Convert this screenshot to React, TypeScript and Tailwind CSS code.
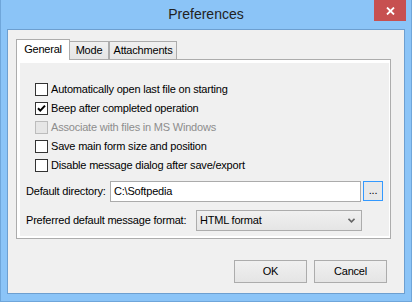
import React from 'react';

const Check: React.FC<{ checked?: boolean; disabled?: boolean }> = ({ checked, disabled }) => (
    <span
        className={`w-[13px] h-[13px] shrink-0 border flex items-center justify-center ${disabled ? 'border-[#bcbcbc] bg-[#e6e6e6]' : 'border-[#333333] bg-white'}`}
    >
        {checked && (
            <svg width="11" height="11" viewBox="0 0 11 11">
                <path d="M2 5.2 L4.3 7.6 L9 2.6" fill="none" stroke="#000" strokeWidth="2" />
            </svg>
        )}
    </span>
);

const options = [
    { label: 'Automatically open last file on starting' },
    { label: 'Beep after completed operation', checked: true },
    { label: 'Associate with files in MS Windows', disabled: true },
    { label: 'Save main form size and position' },
    { label: 'Disable message dialog after save/export' },
];

const App: React.FC = () => {
    return (
        <div className="w-[412px] h-[302px] bg-[#8bc4f7] border border-t-0 border-[#6fa6da] flex flex-col font-['Liberation_Sans',Arial,sans-serif] text-[11px] leading-[13px] tracking-[-0.2px] text-black">
            {/* title bar */}
            <div className="relative h-[29px] shrink-0 flex justify-center pt-[6px]">
                <span className="text-[14px] leading-[16px] tracking-normal text-[#222]">Preferences</span>
                <div className="absolute right-[5px] top-0 w-[32px] h-[21px] bg-[#c75050] flex items-center justify-center">
                    <svg width="9" height="8" viewBox="0 0 9 8">
                        <path d="M1 0.5 L8 7.5 M8 0.5 L1 7.5" stroke="#fff" strokeWidth="1.8" />
                    </svg>
                </div>
            </div>

            {/* client area */}
            <div className="mx-[6px] h-[265px] shrink-0 border border-[#6d9fd0] bg-[#f0f0f0] pt-[9px] pl-[8px] flex flex-col">
                <div className="flex items-end h-[20px]">
                    <div className="relative z-10 mb-[-1px] w-[54px] h-[21px] border border-b-0 border-[#acacac] bg-white flex justify-center pt-[3px]">
                        General
                    </div>
                    <div className="w-[39px] h-[18px] border border-l-0 border-b-0 border-[#acacac] bg-linear-to-b from-[#f0f0f0] to-[#e5e5e5] flex justify-center pt-[2px]">
                        Mode
                    </div>
                    <div className="w-[68px] h-[18px] border border-b-0 border-[#acacac] bg-linear-to-b from-[#f0f0f0] to-[#e5e5e5] flex justify-center pt-[2px]">
                        Attachments
                    </div>
                </div>

                <div className="w-[375px] h-[180px] shrink-0 border border-[#acacac] bg-white pt-[3px] pl-[3px] pr-[1px] pb-[2px]">
                    <div className="h-full bg-[#f0f0f0] pt-[17px] flex flex-col">
                        {options.map((o) => (
                            <div key={o.label} className="h-[19px] flex items-center gap-[3px] pl-[15px]">
                                <Check checked={o.checked} disabled={o.disabled} />
                                <span className={o.disabled ? 'text-[#8d8d8d]' : ''}>{o.label}</span>
                            </div>
                        ))}

                        <div className="mt-[6px] flex items-start h-[21px]">
                            <span className="w-[90px] pl-[6px] self-center">Default directory:</span>
                            <div className="w-[251px] h-[21px] border border-[#ababab] bg-white pl-[3px] flex items-center">
                                C:\Softpedia
                            </div>
                            <div className="ml-[2px] w-[20px] h-[20px] border border-[#3399ff] bg-[#e8e8e8] flex items-center justify-center pb-[2px]">
                                ...
                            </div>
                        </div>

                        <div className="mt-[8px] flex items-center h-[21px]">
                            <span className="w-[176px] pl-[6px]">Preferred default message format:</span>
                            <div className="w-[166px] h-[21px] border border-[#acacac] bg-linear-to-b from-[#f0f0f0] to-[#e5e5e5] pl-[3px] pr-[6px] flex items-center justify-between">
                                <span>HTML format</span>
                                <svg width="7" height="5" viewBox="0 0 7 5">
                                    <path d="M0.5 0.8 L3.5 3.8 L6.5 0.8" fill="none" stroke="#666" strokeWidth="1.6" />
                                </svg>
                            </div>
                        </div>
                    </div>
                </div>

                <div className="mt-[21px] flex justify-end gap-[7px] pr-[17px]">
                    <button className="w-[73px] h-[23px] border border-[#acacac] bg-linear-to-b from-[#f0f0f0] to-[#e5e5e5]">
                        OK
                    </button>
                    <button className="w-[73px] h-[23px] border border-[#acacac] bg-linear-to-b from-[#f0f0f0] to-[#e5e5e5]">
                        Cancel
                    </button>
                </div>
            </div>
        </div>
    );
};

export default App;
